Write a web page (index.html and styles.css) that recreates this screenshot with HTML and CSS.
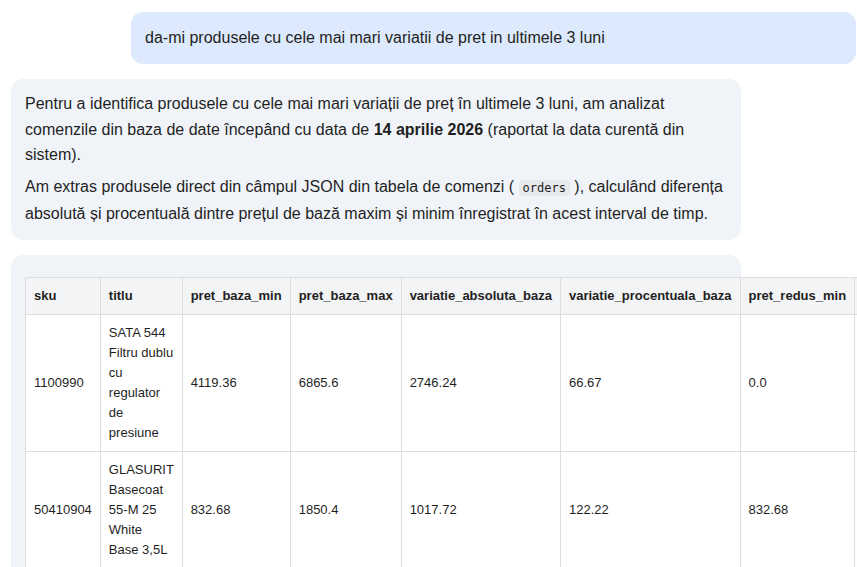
FILE: index.html
```html
<html>
    <head>
        <title>Chat</title>
        <link rel="stylesheet" href="styles.css">
    </head>
    <body>
        <div class="chat">
            <div class="msg msg-user">da-mi produsele cu cele mai mari variatii de pret in ultimele 3 luni</div>

            <div class="msg msg-bot">
                <p>Pentru a identifica produsele cu cele mai mari variații de preț în ultimele 3 luni, am analizat comenzile din baza de date începând cu data de <b>14 aprilie 2026</b> (raportat la data curentă din sistem).</p>
                <p>Am extras produsele direct din câmpul JSON din tabela de comenzi ( <code>orders</code> ), calculând diferența absolută și procentuală dintre prețul de bază maxim și minim înregistrat în acest interval de timp.</p>
            </div>

            <div class="msg msg-bot msg-table">
                <table class="results">
                    <tr>
                        <th>sku</th>
                        <th>titlu</th>
                        <th>pret_baza_min</th>
                        <th>pret_baza_max</th>
                        <th>variatie_absoluta_baza</th>
                        <th>variatie_procentuala_baza</th>
                        <th>pret_redus_min</th>
                        <th>pret_redus_max</th>
                    </tr>
                    <tr>
                        <td>1100990</td>
                        <td>SATA 544 Filtru dublu cu regulator de presiune</td>
                        <td>4119.36</td>
                        <td>6865.6</td>
                        <td>2746.24</td>
                        <td>66.67</td>
                        <td>0.0</td>
                        <td>6865.6</td>
                    </tr>
                    <tr>
                        <td>50410904</td>
                        <td>GLASURIT Basecoat 55-M 25 White Base 3,5L</td>
                        <td>832.68</td>
                        <td>1850.4</td>
                        <td>1017.72</td>
                        <td>122.22</td>
                        <td>832.68</td>
                        <td>1850.4</td>
                    </tr>
                </table>
            </div>
        </div>
    </body>
</html>
```

FILE: styles.css
```css
body {
    margin: 0;
    font-family: "Liberation Sans", Arial, sans-serif;
    color: #1f1f1f;
    background-color: white;
    overflow: hidden;
}

.chat {
    display: flex;
    flex-direction: column;
    gap: 15px;
    padding: 12px 1px 0 11px;
}

.msg {
    border-radius: 12px;
    font-size: 16px;
}

.msg-user {
    margin-left: 120px;
    padding: 14px;
    line-height: 24px;
    background-color: #dde9fc;
}

.msg-bot {
    width: 702px;
    padding: 12px 14px 13px 14px;
    background-color: #f0f4f9;
    line-height: 25.6px;
}

.msg-bot p {
    margin: 0;
}

.msg-bot p + p {
    margin-top: 6px;
}

code {
    font-family: "DejaVu Sans Mono", monospace;
    font-size: 12px;
    background-color: #e6e8ec;
    border-radius: 4px;
    padding: 1px 4px;
}

.msg-table {
    padding-top: 22px;
}

.results {
    border-collapse: collapse;
    background-color: white;
    font-size: 13px;
    line-height: 20px;
}

.results th,
.results td {
    border: 1px solid #dddddd;
    padding: 8px;
    text-align: left;
    vertical-align: middle;
}

.results th {
    background-color: #f3f4f6;
    font-weight: bold;
    white-space: nowrap;
}
```
